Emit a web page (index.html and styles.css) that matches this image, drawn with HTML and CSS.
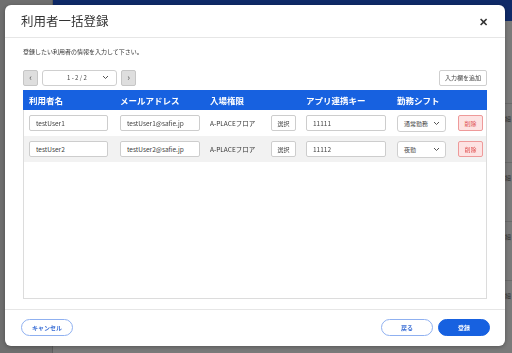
FILE: index.html
```html
<!DOCTYPE html>
<html lang="ja">
<head>
    <meta charset="UTF-8">
    <meta name="viewport" content="width=device-width, initial-scale=1.0">
    <title>利用者一括登録</title>
    <link rel="stylesheet" href="styles.css">
</head>
<body>
    <div class="page">
        <aside class="side"></aside>
        <main class="main">
            <div class="topbar"></div>
            <div class="list">
                <div class="list-row"><span>詳細</span></div>
                <div class="list-row"><span>詳細</span></div>
                <div class="list-row"><span>詳細</span></div>
                <div class="list-row"><span>詳細</span></div>
            </div>
        </main>
    </div>

    <div class="overlay">
        <div class="modal">
            <div class="modal-head">
                <h2>利用者一括登録</h2>
                <span class="close">&#x2715;</span>
            </div>

            <div class="modal-body">
                <p class="lead">登録したい利用者の情報を入力して下さい。</p>

                <div class="toolbar">
                    <div class="pager">
                        <button class="page-btn">&lsaquo;</button>
                        <div class="pick pick-page">
                            <span>1 - 2 / 2</span>
                            <svg width="7" height="5" viewBox="0 0 7 5"><path d="M1 1l2.5 2.5L6 1" fill="none" stroke="#555" stroke-width="1"/></svg>
                        </div>
                        <button class="page-btn">&rsaquo;</button>
                    </div>
                    <button class="btn-add">入力欄を追加</button>
                </div>

                <div class="grid-box">
                    <div class="grid-row grid-head">
                        <div>利用者名</div>
                        <div>メールアドレス</div>
                        <div>入場権限</div>
                        <div></div>
                        <div>アプリ連携キー</div>
                        <div>勤務シフト</div>
                        <div></div>
                    </div>
                    <div class="grid-row">
                        <div><input class="field w-name" type="text" value="testUser1"></div>
                        <div><input class="field w-mail" type="text" value="testUser1@safie.jp"></div>
                        <div class="plain">A-PLACEフロア</div>
                        <div><button class="btn-small">選択</button></div>
                        <div><input class="field w-key" type="text" value="11111"></div>
                        <div>
                            <div class="pick pick-shift">
                                <span>通常勤務</span>
                                <svg width="7" height="5" viewBox="0 0 7 5"><path d="M1 1l2.5 2.5L6 1" fill="none" stroke="#555" stroke-width="1"/></svg>
                            </div>
                        </div>
                        <div><button class="btn-small btn-del">削除</button></div>
                    </div>
                    <div class="grid-row alt">
                        <div><input class="field w-name" type="text" value="testUser2"></div>
                        <div><input class="field w-mail" type="text" value="testUser2@safie.jp"></div>
                        <div class="plain">A-PLACEフロア</div>
                        <div><button class="btn-small">選択</button></div>
                        <div><input class="field w-key" type="text" value="11112"></div>
                        <div>
                            <div class="pick pick-shift">
                                <span>夜勤</span>
                                <svg width="7" height="5" viewBox="0 0 7 5"><path d="M1 1l2.5 2.5L6 1" fill="none" stroke="#555" stroke-width="1"/></svg>
                            </div>
                        </div>
                        <div><button class="btn-small btn-del">削除</button></div>
                    </div>
                </div>
            </div>

            <div class="modal-foot">
                <button class="btn-line">キャンセル</button>
                <div class="foot-right">
                    <button class="btn-line">戻る</button>
                    <button class="btn-fill">登録</button>
                </div>
            </div>
        </div>
    </div>
</body>
</html>
```

FILE: styles.css
```css
* {
    padding: 0;
    margin: 0;
    box-sizing: border-box;
    font-family: "Noto Sans CJK JP", "Noto Sans", sans-serif;
}

body {
    width: 512px;
    height: 353px;
    overflow: hidden;
    background-color: #7a7a7a;
}

/* page behind the dialog */
.page {
    display: flex;
    height: 353px;
}
.side {
    width: 53px;
    background-color: #6f6f6f;
    border-right: 1px solid #5e5e5e;
}
.main {
    flex: 1;
    display: flex;
    flex-direction: column;
}
.topbar {
    height: 21px;
    background-color: #0f2a68;
}
.list {
    padding-top: 82px;
}
.list-row {
    height: 59px;
    border-top: 1px solid #6a6a6a;
    display: flex;
    justify-content: flex-end;
    align-items: flex-start;
    padding-top: 10px;
}
.list-row span {
    font-size: 6px;
    color: #333;
    margin-right: 1px;
}

/* dialog */
.overlay {
    position: fixed;
    top: 0;
    left: 0;
    width: 512px;
    height: 353px;
}
.modal {
    position: absolute;
    top: 5px;
    left: 5px;
    width: 500px;
    height: 341px;
    background-color: #fff;
    border-radius: 6px;
    display: flex;
    flex-direction: column;
    box-shadow: 0 1px 4px rgba(0, 0, 0, 0.3);
}
.modal-head {
    height: 33px;
    padding: 0 16px;
    display: flex;
    align-items: center;
    justify-content: space-between;
    border-bottom: 1px solid #e6e6e6;
}
.modal-head h2 {
    font-size: 12.5px;
    font-weight: 400;
    color: #333;
    margin-top: -1px;
}
.close {
    font-size: 11px;
    font-weight: 700;
    color: #333;
    margin-right: 1px;
}

.modal-body {
    flex: 1;
    padding: 9px 18px 10px 18px;
    display: flex;
    flex-direction: column;
    border-bottom: 1px solid #e6e6e6;
}
.lead {
    font-size: 6px;
    line-height: 10px;
    color: #333;
}

.toolbar {
    margin-top: 12px;
    display: flex;
    justify-content: space-between;
    align-items: center;
    height: 17px;
}
.pager {
    display: flex;
    gap: 4px;
    align-items: center;
}
.page-btn {
    width: 15px;
    height: 16px;
    border: 1px solid #c6c6c6;
    border-radius: 2px;
    background-color: #dedede;
    color: #555;
    font-size: 9px;
    line-height: 12px;
}
.pick {
    display: flex;
    align-items: center;
    justify-content: space-between;
    border: 1px solid #cfcfcf;
    border-radius: 3px;
    background-color: #fff;
    font-size: 6px;
    color: #444;
}
.pick-page {
    width: 75px;
    height: 16px;
    padding: 0 7px 0 24px;
}
.btn-add {
    width: 48px;
    height: 16px;
    border: 1px solid #cfcfcf;
    border-radius: 2px;
    background-color: #fff;
    font-size: 6px;
    color: #444;
}

.grid-box {
    margin-top: 4px;
    flex: 1;
    border: 1px solid #dcdcdc;
    border-top: none;
}
.grid-row {
    display: grid;
    grid-template-columns: 91px 90px 61px 35px 91px 61px 34px;
    height: 26px;
    align-items: center;
}
.grid-row > div {
    padding-left: 5px;
}
.grid-head {
    height: 20px;
    margin: 0 -1px;
    background-color: #1761e0;
    color: #fff;
    font-size: 8.5px;
    font-weight: 700;
}
.grid-head > div {
    padding-left: 6px;
}
.alt {
    background-color: #f2f2f2;
}
.field {
    display: block;
    height: 16px;
    border: 1px solid #cdcdcd;
    border-radius: 2px;
    padding-left: 6px;
    font-size: 6.5px;
    color: #444;
    background-color: #fff;
    outline: none;
}
.w-name {
    width: 79px;
}
.w-mail {
    width: 80px;
}
.w-key {
    width: 80px;
}
.plain {
    font-size: 6.5px;
    color: #333;
}
.btn-small {
    display: block;
    width: 25px;
    height: 16px;
    border: 1px solid #cdcdcd;
    border-radius: 2px;
    background-color: #fff;
    font-size: 6px;
    color: #444;
}
.btn-del {
    background-color: #fde3e3;
    border-color: #ee9a9a;
    color: #e05555;
}
.pick-shift {
    width: 49px;
    height: 17px;
    padding: 0 5px 0 6px;
}

.modal-foot {
    height: 36px;
    padding: 0 15px 2px 16px;
    display: flex;
    justify-content: space-between;
    align-items: center;
}
.foot-right {
    display: flex;
    gap: 5px;
}
.btn-line, .btn-fill {
    width: 52px;
    height: 17px;
    border-radius: 9px;
    font-size: 6px;
    font-weight: 700;
}
.btn-line {
    border: 1px solid #8fb0f0;
    background-color: #fff;
    color: #3b6fd6;
}
.btn-fill {
    border: 1px solid #1761e0;
    background-color: #1761e0;
    color: #fff;
}
```
